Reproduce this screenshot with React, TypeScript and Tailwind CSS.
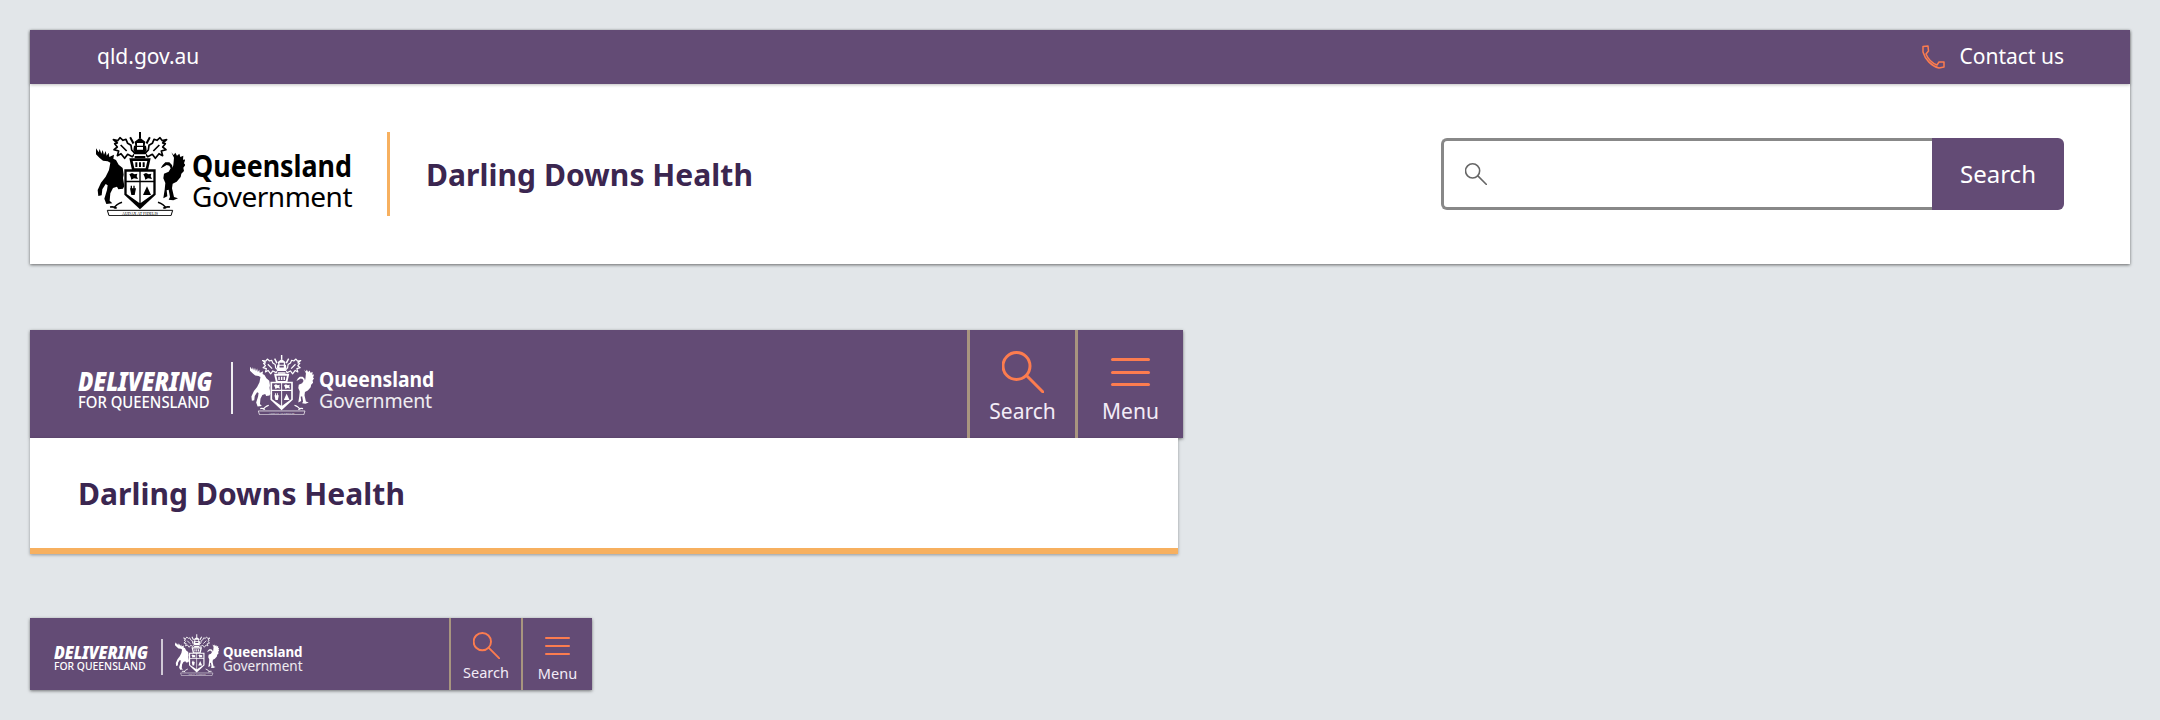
import React from "react";

const font = "font-['Noto_Sans',sans-serif]";

// coat of arms, drawn in zoomed-crop coordinates
const Crest = ({ className, cut }: { className: string; cut: string }) => {
  return (
    <svg viewBox="18 21 267 252" className={className} aria-hidden="true">
      <g className="fill-current">
        {/* stag */}
        <path d="M18 70l8 12 3-10 5 14 4-11 4 14 5-11 3 14 6-9 2 13 6-3 8-4-2 12 8 4 8 14 12 10 3 20-2 10 4 24-4 8-14 2-4-8-12 4-8 16-2 22 8 8-18 2-6-16 8-26 2-14-6-4-10 16-2 18-10 2-2-18 10-22 14-18 10-20 4-22-8-4-14-2-10-8-14-14z" />
        {/* brolga */}
        <path d="M244 82l7 8 5-7 5 9 7-6 3 10 9-4-1 12 7-1-4 12 4 5-6 8 2 10-8 8-2 10-12 14-12 6-2 14 6 26 12 4-14 6-14-2 4-8-4-22-6 2 2 18-12 6 4-26 2-20-6-14 2-14 14-6 6-10-4-8-8-2-10 6-8 4 6-10 8-8 12 0 8 8 2 8 2-8 2-22z" />
        {/* shield */}
        <path d="M103 133h94v76l-47 44-47-44z" />
        {/* helm */}
        <path d="M118 100h64l-8 35h-48z" />
        {/* crown tower */}
        <path d="M130 76l2-14h4l-2-12 16-12 16 12-2 12h4l2 14-4 6v18h-32v-18z" />
        {/* horns on the crown */}
        <path d="M128 58l-10-20 5-3 10 18zM172 58l10-20-5-3-10 18zM147 21h6v18h-6z" />
      </g>
      {/* mantling */}
      <g className="fill-none stroke-current" strokeWidth="5" strokeLinejoin="round">
        <path d="M70 44l13 3 7-9 9 8 9-3 5 12 10 6 2 14 10 10-8 10-14-7-9 12-11-14-11 6 4-14-14-4 10-8-8-10 8-2z" />
        <path d="M230 44l-13 3-7-9-9 8-9-3-5 12-10 6-2 14-10 10 8 10 14-7 9 12 11-14 11 6-4-14 14-4-10-8 8-10-8-2z" />
        <path d="M92 60l18 18M208 60l-18 18" />
        <path d="M60 246q14-2 20 4M240 246q-14-2-20 4M96 232q-18 6-24 18M204 232q18 6 24 18" />
      </g>
      {/* cut-outs */}
      <g className={cut}>
        <path d="M128 108h44l-5 22h-34z" />
        <path d="M141 54h18v8h-18zM141 66h18v8h-18zM132 88h36v5h-36z" />
        <path d="M110 140h38v27h-38zM152 140h38v27h-38z" />
        <path d="M110 172h38v62l-38-27zM152 172h38v35l-38 27z" />
      </g>
      <g className="fill-current">
        <path d="M136 112h6v14h-6zM147 112h6v14h-6zM158 112h6v14h-6z" />
        <path d="M118 148l8-4 8 4 8-2-2 8 4 8-12-2-8 4-2-8zM160 148l8-4 8 4 8-2-2 8 4 8-12-2-8 4-2-8z" />
        <path d="M122 182h4v8h4v-8h4v8h4l-4 20h-10l-4-20h2zM171 184l12 26h-24z" />
      </g>
      {/* motto scroll */}
      <path d="M52 256h196l-5 16H57z" className="fill-none stroke-current" strokeWidth="3" />
      <text x="150" y="269" textAnchor="middle" fontSize="12" className="fill-current font-['Liberation_Serif',serif]">
        AUDAX AT FIDELIS
      </text>
    </svg>
  );
};

const SearchGlyph = ({ className, width = 2 }: { className: string; width?: number }) => {
  return (
    <svg viewBox="0 0 42 42" className={className} fill="none" stroke="currentColor" strokeWidth={width} strokeLinecap="round" aria-hidden="true">
      <circle cx="14.5" cy="15" r="13.5" />
      <path d="M25 25l16 16" />
    </svg>
  );
};

const Hamburger = ({ className, bar }: { className: string; bar: string }) => {
  return (
    <div className={`flex flex-col justify-between ${className}`}>
      <div className={`${bar} rounded-full bg-[#fc7c4f]`} />
      <div className={`${bar} rounded-full bg-[#fc7c4f]`} />
      <div className={`${bar} rounded-full bg-[#fc7c4f]`} />
    </div>
  );
};

const App = () => {
  return (
    <div className={`${font} h-[720px] w-[2160px] overflow-hidden bg-[#e2e6e9] pl-[30px] pr-[30px] pt-[30px]`}>
      {/* desktop */}
      <div className="w-[2100px] bg-white shadow-[0_1px_3px_rgba(0,0,0,0.55)]">
        <div className="flex h-[54px] items-center justify-between bg-[#634b75] pl-[67px] pr-[66px] text-[21px] text-white shadow-[0_1px_3px_rgba(0,0,0,0.25)]">
          <span>qld.gov.au</span>
          <div className="flex items-center gap-[15px]">
            <svg viewBox="0 0 24 24" className="h-[24px] w-[24px] text-[#fc7c4f]" fill="none" stroke="currentColor" strokeWidth="1.5" strokeLinejoin="round" aria-hidden="true">
              <path d="M2 1.500l5-.5.5 5L5 9c2 5 6 9 11 11l2-3h5v5l-5 1C10 21 4 14 2 7z" />
            </svg>
            <span>Contact us</span>
          </div>
        </div>
        <div className="flex h-[180px] items-center justify-between pl-[66px] pr-[66px]">
          <div className="flex items-center">
            <Crest className="h-[84px] w-[89px] text-black" cut="fill-white" />
            <div className="ml-[7px] mt-[12px] flex w-[161px] flex-col whitespace-nowrap text-black">
              <span className="origin-left scale-x-[0.865] text-[31px] font-bold leading-[32px]">Queensland</span>
              <span className="text-[28px] leading-[30px] tracking-[-0.5px]">Government</span>
            </div>
            <div className="ml-[34px] h-[84px] w-[3px] bg-[#f7b05f]" />
            <span className="ml-[36px] text-[30px] font-bold tracking-[0.05px] text-[#3b2650]">Darling Downs Health</span>
          </div>
          <div className="flex h-[72px] w-[623px]">
            <div className="flex flex-1 items-center rounded-l-[6px] border-[3px] border-r-0 border-[#888888] pl-[21px] text-[#666666]">
              <SearchGlyph className="h-[22px] w-[22px]" width={3} />
            </div>
            <div className="flex w-[132px] items-center justify-center rounded-r-[6px] bg-[#634b75] text-[24px] text-white">Search</div>
          </div>
        </div>
      </div>

      {/* tablet */}
      <div className="mt-[66px] w-[1178px]">
        <div className="flex h-[108px] w-[1153px] items-center justify-between bg-[#634b75] pl-[48px] shadow-[0_1px_3px_rgba(0,0,0,0.5)]">
          <div className="flex items-center text-white">
            <div className="mt-[10px] flex w-[134px] flex-col whitespace-nowrap">
              <span className="origin-left scale-x-[0.87] text-[26px] font-black italic leading-[24px]">DELIVERING</span>
              <span className="origin-left scale-x-[0.9] text-[16.500px] font-medium leading-[17px]">FOR QUEENSLAND</span>
            </div>
            <div className="ml-[19px] mt-[8px] h-[52px] w-[2px] bg-white/90" />
            <Crest className="ml-[17px] mt-[2px] h-[60px] w-[64px] text-white" cut="fill-[#644c76]" />
            <div className="ml-[5px] mt-[9px] flex w-[113px] flex-col whitespace-nowrap">
              <span className="origin-left scale-x-[0.92] text-[21px] font-bold leading-[24px]">Queensland</span>
              <span className="text-[19.500px] leading-[20px] tracking-[-0.2px] text-white/90">Government</span>
            </div>
          </div>
          <div className="flex h-full">
            <div className="flex w-[108px] flex-col items-center border-l-[3px] border-[#a8957f] pt-[21px] text-[21px] text-[#f3ecf7]">
              <SearchGlyph className="h-[42px] w-[42px] text-[#fc7c4f]" width={3} />
              <span className="mt-[4px] leading-[28px]">Search</span>
            </div>
            <div className="flex w-[108px] flex-col items-center border-l-[3px] border-[#a8957f] pt-[28px] text-[21px] text-[#f3ecf7]">
              <Hamburger className="h-[28px] w-[39px]" bar="h-[3px]" />
              <span className="mt-[11px] leading-[28px]">Menu</span>
            </div>
          </div>
        </div>
        <div className="flex h-[116px] w-[1148px] items-center border-b-[6px] border-[#f7b05f] bg-white pl-[48px] text-[30px] font-bold tracking-[0.05px] text-[#3b2650] shadow-[0_1px_3px_rgba(0,0,0,0.35)]">
          Darling Downs Health
        </div>
      </div>

      {/* mobile */}
      <div className="mt-[64px] flex h-[72px] w-[562px] items-center justify-between bg-[#634b75] pl-[24px] shadow-[0_1px_3px_rgba(0,0,0,0.5)]">
        <div className="flex items-center text-white">
          <div className="mt-[8px] flex w-[93px] flex-col whitespace-nowrap">
            <span className="origin-left scale-x-[0.88] text-[18px] font-black italic leading-[16px]">DELIVERING</span>
            <span className="origin-left scale-x-[0.9] text-[11.500px] font-medium leading-[12px]">FOR QUEENSLAND</span>
          </div>
          <div className="ml-[14px] mt-[6px] h-[36px] w-[2px] bg-white/70" />
          <Crest className="ml-[12px] mt-[2px] h-[42px] w-[44px] text-white" cut="fill-[#644c76]" />
          <div className="ml-[4px] mt-[8px] flex w-[79px] flex-col whitespace-nowrap">
            <span className="origin-left scale-x-[0.888] text-[15px] font-bold leading-[16px]">Queensland</span>
            <span className="text-[13.500px] leading-[14px] text-white/90">Government</span>
          </div>
        </div>
        <div className="flex h-full">
          <div className="flex w-[72px] flex-col items-center border-l-[2px] border-[#a8957f] pt-[14px] text-[14.500px] text-[#f3ecf7]">
            <SearchGlyph className="h-[27px] w-[27px] text-[#fc7c4f]" width={3} />
            <span className="mt-[3px] leading-[20px]">Search</span>
          </div>
          <div className="flex w-[71px] flex-col items-center border-l-[2px] border-[#a8957f] pt-[19px] text-[14.500px] text-[#f3ecf7]">
            <Hamburger className="h-[18px] w-[25px]" bar="h-[2px]" />
            <span className="mt-[8px] leading-[20px]">Menu</span>
          </div>
        </div>
      </div>
    </div>
  );
};

export default App;
